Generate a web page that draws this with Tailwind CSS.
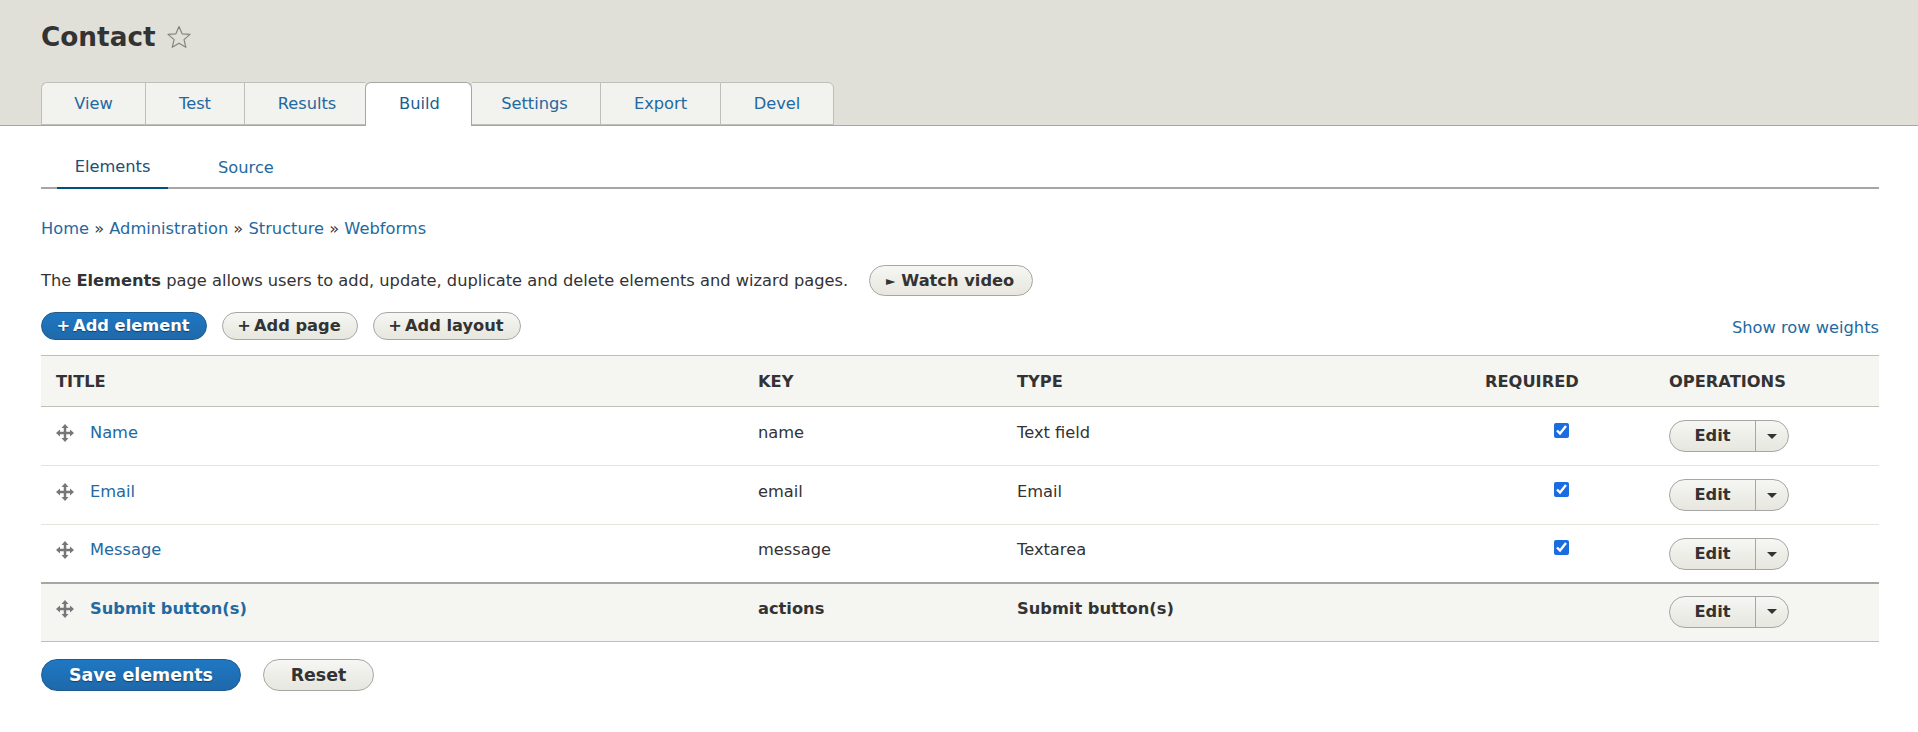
<!DOCTYPE html>
<html lang="en">
<head>
  <meta charset="UTF-8">
  <title>Contact</title>
  <script src="https://cdn.jsdelivr.net/npm/@tailwindcss/browser@4"></script>
</head>
<body class="bg-white font-['DejaVu_Sans',sans-serif] text-[16.25px] leading-[22px] text-[#333] overflow-hidden">
  <!-- page header -->
  <header class="h-[126px] bg-[#e0e0d8] border-b border-[#a6a6a6] px-[41px] pt-[19px] relative">
    <div class="flex items-center gap-[10px] h-[36px]">
      <h1 class="text-[26.3px] leading-[36px] font-bold text-[#333]">Contact</h1>
      <svg class="w-[26px] h-[26px]" viewBox="0 0 26 26" fill="none" stroke="#85857b" stroke-width="1.2" stroke-linejoin="round"><path d="M13 2.500l3.100 7.300 7.900.6-6 5.200 1.900 7.700-6.900-4.100-6.800 4.100 1.900-7.700-6.100-5.200 7.900-.6z"/></svg>
    </div>
    <nav class="absolute left-[41px] top-[82px] h-[44px] flex text-[#2369a0]">
      <a class="w-[104px] h-[43px] flex items-center justify-center bg-[#f2f2ee] border border-r-0 border-[#bfbfba] rounded-tl-md">View</a>
      <a class="w-[99px] h-[43px] flex items-center justify-center bg-[#f2f2ee] border border-r-0 border-[#bfbfba]">Test</a>
      <a class="w-[121px] h-[43px] flex items-center justify-center bg-[#f2f2ee] border border-r-0 border-[#bfbfba] pl-[4px]">Results</a>
      <a class="w-[107px] h-[44px] flex items-center justify-center bg-white border border-b-0 border-[#a6a6a6] rounded-t-md pb-[1px] pl-[2px] text-[#1a5f90]">Build</a>
      <a class="w-[128px] h-[43px] flex items-center justify-center bg-[#f2f2ee] border-y border-[#bfbfba] pr-[3px]">Settings</a>
      <a class="w-[120px] h-[43px] flex items-center justify-center bg-[#f2f2ee] border border-r-0 border-[#bfbfba]">Export</a>
      <a class="w-[114px] h-[43px] flex items-center justify-center bg-[#f2f2ee] border border-[#bfbfba] rounded-tr-md">Devel</a>
    </nav>
  </header>

  <main class="pl-[41px] w-[1879px]">
    <!-- secondary tabs -->
    <nav class="h-[63px] border-b-2 border-[#a6a6a6] flex pl-[16px] text-[#2369a0]">
      <a class="w-[111px] h-[63px] flex items-center justify-center pt-[21px] text-[#1a4f78] border-b-2 border-[#004f80]">Elements</a>
      <a class="ml-[50px] h-[63px] flex items-center pt-[21px]">Source</a>
    </nav>

    <div class="mt-[29px] h-[22px]">
      <a class="text-[#2369a0]">Home</a> » <a class="text-[#2369a0]">Administration</a> » <a class="text-[#2369a0]">Structure</a> » <a class="text-[#2369a0]">Webforms</a>
    </div>

    <div class="mt-[25px] h-[31px] flex items-center">
      <p>The <b>Elements</b> page allows users to add, update, duplicate and delete elements and wizard pages.</p>
      <button class="ml-[21px] h-[31px] w-[164px] rounded-full border border-[#a6a6a6] bg-linear-to-b from-[#f6f6f3] to-[#e7e7df] font-bold flex items-center justify-center gap-[6px] pr-[2px]"><span class="text-[12px]">►</span>Watch video</button>
    </div>

    <div class="mt-[16px] h-[28px] flex items-center gap-[15px] font-bold">
      <button class="w-[166px] h-[28px] rounded-full border border-[#1e5c90] bg-linear-to-b from-[#1f78c2] to-[#1e69ab] text-white flex items-center justify-center pr-[2px] [text-shadow:0_1px_1px_rgba(0,0,0,0.4)]"><span class="mr-[3px]">+</span>Add element</button>
      <button class="w-[136px] h-[28px] rounded-full border border-[#a6a6a6] bg-linear-to-b from-[#f6f6f3] to-[#e7e7df] flex items-center justify-center pr-[2px]"><span class="mr-[3px]">+</span>Add page</button>
      <button class="w-[148px] h-[28px] rounded-full border border-[#a6a6a6] bg-linear-to-b from-[#f6f6f3] to-[#e7e7df] flex items-center justify-center pr-[2px]"><span class="mr-[3px]">+</span>Add layout</button>
      <a class="ml-auto mt-[3px] font-normal text-[#2369a0]">Show row weights</a>
    </div>

    <table class="mt-[15px] w-[1838px] table-fixed border-collapse text-left">
      <thead>
        <tr class="h-[51px] bg-[#f5f5f2] border-t border-b border-[#bfbfba] uppercase font-bold">
          <th class="w-[702px] pl-[15px] pt-[1px]">Title</th>
          <th class="w-[259px] pl-[15px] pt-[1px]">Key</th>
          <th class="w-[468px] pl-[15px] pt-[1px]">Type</th>
          <th class="w-[184px] pl-[15px] pt-[1px]">Required</th>
          <th class="w-[225px] pl-[15px] pt-[1px]">Operations</th>
        </tr>
      </thead>
      <tbody>
        <tr class="h-[59px] border-b border-[#e6e4df] align-top">
          <td class="pl-[15px] pt-[15px]"><div class="flex items-center gap-[16px]"><svg class="w-[18px] h-[18px]" viewBox="0 0 18 18" fill="#777"><path d="M9 0l3.500 4h-2.250v3.750h3.750v-2.250l4 3.500-4 3.500v-2.250h-3.750v3.750h2.250l-3.500 4-3.500-4h2.250v-3.750h-3.750v2.250l-4-3.500 4-3.500v2.250h3.750v-3.750h-2.250z"/></svg><a class="text-[#2369a0]">Name</a></div></td>
          <td class="pl-[15px] pt-[15px]">name</td>
          <td class="pl-[15px] pt-[15px]">Text field</td>
          <td class="pt-[16px] pr-[2px] text-center"><input type="checkbox" checked class="w-[15px] h-[15px] inline-block align-top accent-[#1b6ce0]"></td>
          <td class="pl-[15px] pt-[13px]"><div class="flex w-[120px] h-[32px] rounded-full border border-[#a6a6a6] bg-linear-to-b from-[#f6f6f3] to-[#e7e7df] font-bold"><span class="w-[86px] flex items-center justify-center border-r border-[#a6a6a6]">Edit</span><span class="flex-1 flex items-center justify-center"><span class="w-0 h-0 border-x-[5px] border-x-transparent border-t-[5px] border-t-[#333]"></span></span></div></td>
        </tr>
        <tr class="h-[59px] border-b border-[#e6e4df] align-top">
          <td class="pl-[15px] pt-[15px]"><div class="flex items-center gap-[16px]"><svg class="w-[18px] h-[18px]" viewBox="0 0 18 18" fill="#777"><path d="M9 0l3.500 4h-2.250v3.750h3.750v-2.250l4 3.500-4 3.500v-2.250h-3.750v3.750h2.250l-3.500 4-3.500-4h2.250v-3.750h-3.750v2.250l-4-3.500 4-3.500v2.250h3.750v-3.750h-2.250z"/></svg><a class="text-[#2369a0]">Email</a></div></td>
          <td class="pl-[15px] pt-[15px]">email</td>
          <td class="pl-[15px] pt-[15px]">Email</td>
          <td class="pt-[16px] pr-[2px] text-center"><input type="checkbox" checked class="w-[15px] h-[15px] inline-block align-top accent-[#1b6ce0]"></td>
          <td class="pl-[15px] pt-[13px]"><div class="flex w-[120px] h-[32px] rounded-full border border-[#a6a6a6] bg-linear-to-b from-[#f6f6f3] to-[#e7e7df] font-bold"><span class="w-[86px] flex items-center justify-center border-r border-[#a6a6a6]">Edit</span><span class="flex-1 flex items-center justify-center"><span class="w-0 h-0 border-x-[5px] border-x-transparent border-t-[5px] border-t-[#333]"></span></span></div></td>
        </tr>
        <tr class="h-[58px] border-b-2 border-[#a6a6a6] align-top">
          <td class="pl-[15px] pt-[14px]"><div class="flex items-center gap-[16px]"><svg class="w-[18px] h-[18px]" viewBox="0 0 18 18" fill="#777"><path d="M9 0l3.500 4h-2.250v3.750h3.750v-2.250l4 3.500-4 3.500v-2.250h-3.750v3.750h2.250l-3.500 4-3.500-4h2.250v-3.750h-3.750v2.250l-4-3.500 4-3.500v2.250h3.750v-3.750h-2.250z"/></svg><a class="text-[#2369a0]">Message</a></div></td>
          <td class="pl-[15px] pt-[14px]">message</td>
          <td class="pl-[15px] pt-[14px]">Textarea</td>
          <td class="pt-[15px] pr-[2px] text-center"><input type="checkbox" checked class="w-[15px] h-[15px] inline-block align-top accent-[#1b6ce0]"></td>
          <td class="pl-[15px] pt-[13px]"><div class="flex w-[120px] h-[32px] rounded-full border border-[#a6a6a6] bg-linear-to-b from-[#f6f6f3] to-[#e7e7df] font-bold"><span class="w-[86px] flex items-center justify-center border-r border-[#a6a6a6]">Edit</span><span class="flex-1 flex items-center justify-center"><span class="w-0 h-0 border-x-[5px] border-x-transparent border-t-[5px] border-t-[#333]"></span></span></div></td>
        </tr>
        <tr class="h-[59px] bg-[#f5f5f2] border-b border-[#bfbfba] align-top font-bold">
          <td class="pl-[15px] pt-[14px]"><div class="flex items-center gap-[16px]"><svg class="w-[18px] h-[18px]" viewBox="0 0 18 18" fill="#777"><path d="M9 0l3.500 4h-2.250v3.750h3.750v-2.250l4 3.500-4 3.500v-2.250h-3.750v3.750h2.250l-3.500 4-3.500-4h2.250v-3.750h-3.750v2.250l-4-3.500 4-3.500v2.250h3.750v-3.750h-2.250z"/></svg><a class="text-[#2369a0]">Submit button(s)</a></div></td>
          <td class="pl-[15px] pt-[14px]">actions</td>
          <td class="pl-[15px] pt-[14px]">Submit button(s)</td>
          <td></td>
          <td class="pl-[15px] pt-[12px]"><div class="flex w-[120px] h-[32px] rounded-full border border-[#a6a6a6] bg-linear-to-b from-[#f6f6f3] to-[#e7e7df] font-bold"><span class="w-[86px] flex items-center justify-center border-r border-[#a6a6a6]">Edit</span><span class="flex-1 flex items-center justify-center"><span class="w-0 h-0 border-x-[5px] border-x-transparent border-t-[5px] border-t-[#333]"></span></span></div></td>
        </tr>
      </tbody>
    </table>

    <div class="mt-[17px] flex gap-[22px] text-[17.4px] font-bold">
      <button class="w-[200px] h-[32px] rounded-full border border-[#1e5c90] bg-linear-to-b from-[#1f78c2] to-[#1e69ab] text-white [text-shadow:0_1px_1px_rgba(0,0,0,0.4)]">Save elements</button>
      <button class="w-[111px] h-[32px] rounded-full border border-[#a6a6a6] bg-linear-to-b from-[#f6f6f3] to-[#e7e7df]">Reset</button>
    </div>
  </main>
</body>
</html>
